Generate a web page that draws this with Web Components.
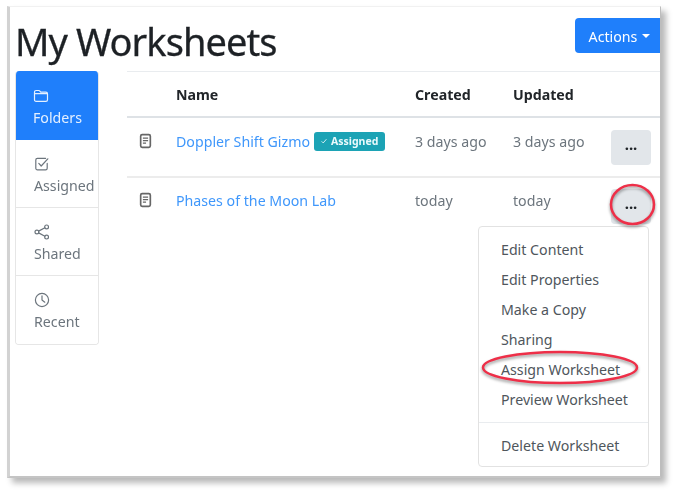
<!DOCTYPE html>
<html lang="en">
<head>
<meta charset="utf-8">
<title>My Worksheets</title>
<style>
  html, body { margin: 0; padding: 0; background: #fff; }
  body { font-family: "Noto Sans", "Open Sans", Arial, sans-serif; color: #212529; width: 675px; height: 491px; overflow: hidden; }
</style>
</head>
<body>
<ws-page>
  <ws-header slot="header" title-text="My Worksheets"></ws-header>
  <ws-sidenav slot="nav">
    <ws-nav-item icon="folder" active>Folders</ws-nav-item>
    <ws-nav-item icon="check">Assigned</ws-nav-item>
    <ws-nav-item icon="share">Shared</ws-nav-item>
    <ws-nav-item icon="clock">Recent</ws-nav-item>
  </ws-sidenav>
  <ws-table slot="main">
    <ws-row name="Doppler Shift Gizmo" created="3 days ago" updated="3 days ago" assigned></ws-row>
    <ws-row name="Phases of the Moon Lab" created="today" updated="today" last></ws-row>
  </ws-table>
  <ws-menu slot="overlay"></ws-menu>
</ws-page>

<script>
(function () {
  var ICONS = {
    folder: '<path d="M1.5 4.2c0-1 .7-1.7 1.6-1.7h2.6c.6 0 1 .3 1.4.8l.6.8h5.2c1 0 1.6.7 1.6 1.6v6c0 1-.7 1.7-1.6 1.7H3.1c-1 0-1.6-.7-1.6-1.7z"/><path d="M1.6 5.6h12.8"/>',
    check: '<path d="M13.2 7.4v4.8c0 .9-.7 1.6-1.6 1.6H3.4c-.9 0-1.6-.7-1.6-1.6V4c0-.9.7-1.6 1.6-1.6h8.2"/><path d="M4.8 7.4l2.4 2.6 6.6-7.2"/>',
    share: '<circle cx="12.6" cy="2.9" r="1.9"/><circle cx="2.9" cy="8" r="1.9"/><circle cx="12.6" cy="13.1" r="1.9"/><path d="M4.6 7.1l6.3-3.3M4.6 8.9l6.3 3.3"/>',
    clock: '<circle cx="8" cy="8" r="6.6"/><path d="M8 3.9V8l2.8 2.2"/>'
  };

  class WsPage extends HTMLElement {
    constructor() {
      super();
      this.attachShadow({ mode: "open" });
      this.shadowRoot.innerHTML =
        "<style>" +
        ":host{display:block;position:relative;box-sizing:border-box;width:654px;height:472px;margin:6px 0 0 7px;" +
        "background:#fff;border-top:1px solid #f1f1f1;border-left:3px solid #d2d2d2;border-right:1px solid #bdbdbd;border-bottom:2px solid #c4c4c4;" +
        "box-shadow:5px 5px 6px rgba(0,0,0,.28);filter:blur(.35px);}" +
        ".body{display:flex;align-items:flex-start;padding-left:5px;}" +
        ".nav{flex:0 0 84px;}" +
        ".main{flex:1;margin-left:28px;min-width:0;}" +
        "</style>" +
        "<slot name='header'></slot>" +
        "<div class='body'>" +
        "<div class='nav'><slot name='nav'></slot></div>" +
        "<div class='main'><slot name='main'></slot></div>" +
        "</div>" +
        "<slot name='overlay'></slot>";
    }
  }

  class WsHeader extends HTMLElement {
    constructor() {
      super();
      this.attachShadow({ mode: "open" });
    }

    connectedCallback() {
      this.shadowRoot.innerHTML =
        "<style>" +
        ":host{display:flex;justify-content:space-between;align-items:flex-start;height:64px;padding-left:5px;box-sizing:border-box;}" +
        "h1{margin:9px 0 0;font-size:38px;line-height:50px;font-weight:400;color:#1d2125;letter-spacing:-.95px;-webkit-text-stroke:.3px #1d2125;}" +
        "button{margin-top:11px;width:85px;height:35px;border:0;border-radius:4px 0 0 4px;background:#1f7ffb;color:#fff;" +
        "font:14.2px/35px 'Noto Sans',sans-serif;padding:1px 0 0 4px;display:flex;align-items:center;justify-content:center;gap:5px;}" +
        ".caret{width:0;height:0;border:4px solid transparent;border-top-color:#fff;border-bottom:0;}" +
        "</style>" +
        "<h1>" + this.getAttribute("title-text") + "</h1>" +
        "<button>Actions<span class='caret'></span></button>";
    }
  }

  class WsSidenav extends HTMLElement {
    constructor() {
      super();
      this.attachShadow({ mode: "open" });
      this.shadowRoot.innerHTML =
        "<style>:host{display:block;width:84px;border:1px solid #e6e6e6;border-top:0;border-radius:4px;box-sizing:border-box;overflow:hidden;}</style>" +
        "<slot></slot>";
    }
  }

  class WsNavItem extends HTMLElement {
    constructor() {
      super();
      this.attachShadow({ mode: "open" });
    }

    connectedCallback() {
      var active = this.hasAttribute("active");
      var icon = ICONS[this.getAttribute("icon")];
      this.shadowRoot.innerHTML =
        "<style>" +
        ":host{display:block;box-sizing:border-box;height:" + (active ? "69" : "68") + "px;padding:" + (active ? "17" : "16") + "px 0 0 18px;" +
        "color:" + (active ? "#e4f0ff" : "#6c757d") + ";background:" + (active ? "#1f7ffb" : "#fff") + ";" +
        (active ? "margin:0 -1px;" : "border-bottom:1px solid #e6e6e6;") + "}" +
        ":host(:last-child){border-bottom:0;}" +
        "svg{display:block;width:16px;height:16px;fill:none;stroke:currentColor;stroke-width:1.2;stroke-linecap:round;stroke-linejoin:round;}" +
        ".label{display:block;margin-top:4px;font-size:14.2px;line-height:20px;white-space:nowrap;}" +
        "</style>" +
        "<svg viewBox='0 0 16 16'>" + icon + "</svg>" +
        "<span class='label'><slot></slot></span>";
    }
  }

  class WsTable extends HTMLElement {
    constructor() {
      super();
      this.attachShadow({ mode: "open" });
      this.shadowRoot.innerHTML =
        "<style>" +
        ":host{display:block;--cols:49px 239px 98px 98px 1fr;}" +
        ".head{display:grid;grid-template-columns:var(--cols);height:44px;box-sizing:content-box;border-top:1px solid #e9ecef;border-bottom:2px solid #dee2e6;" +
        "font-size:14.2px;font-weight:700;line-height:46px;color:#212529;}" +
        "</style>" +
        "<div class='head'><span></span><span>Name</span><span>Created</span><span>Updated</span><span></span></div>" +
        "<slot></slot>";
    }
  }

  class WsRow extends HTMLElement {
    constructor() {
      super();
      this.attachShadow({ mode: "open" });
    }

    connectedCallback() {
      var badge = this.hasAttribute("assigned")
        ? "<span class='badge'><svg viewBox='0 0 10 10'><path d='M2 5.4l2 2 4-4.6'/></svg>Assigned</span>"
        : "";
      var last = this.hasAttribute("last");
      this.shadowRoot.innerHTML =
        "<style>" +
        ":host{display:grid;grid-template-columns:var(--cols);height:60px;box-sizing:border-box;" +
        "font-size:14.2px;line-height:24px;color:#6c757d;" + (last ? "" : "border-bottom:2px solid #ececec;") + "}" +
        "div{padding-top:" + (last ? "11" : "12") + "px;white-space:nowrap;}" +
        ".doc{display:block;width:13px;height:16px;margin:3px 0 0 12px;fill:none;stroke:#666;stroke-width:1.8;}" +
        ".doc .fill{stroke-width:1.3;}" +
        "a{color:#3f97fb;text-decoration:none;}" +
        ".badge{display:inline-flex;align-items:center;gap:3px;box-sizing:border-box;height:19px;width:71px;margin-left:4px;padding-left:6px;vertical-align:2px;" +
        "background:#1ca3b5;color:#eafafc;border-radius:3px;font-size:10.5px;font-weight:700;line-height:19px;}" +
        ".badge svg{width:8px;height:8px;fill:none;stroke:#fff;stroke-width:1;}" +
        "button{display:flex;align-items:center;justify-content:center;width:40px;height:35px;margin-top:0;border:0;border-radius:4px;padding:0;" +
        "background:#e2e6ea;color:#212529;font:700 15px/1 'Noto Sans',sans-serif;}" +
        "button span{display:block;transform:translateY(-3px);}" +
        "</style>" +
        "<div><svg class='doc' viewBox='0 0 14 16'><rect x='1.8' y='1.2' width='10.4' height='13.6' rx='1.6'/>" +
        "<path class='fill' d='M4.2 5h5.6M4.2 7.6h5.6M4.2 10.2h3.4'/></svg></div>" +
        "<div><a href='#'>" + this.getAttribute("name") + "</a>" + badge + "</div>" +
        "<div>" + this.getAttribute("created") + "</div>" +
        "<div>" + this.getAttribute("updated") + "</div>" +
        "<div><button><span>...</span></button></div>";
    }
  }

  // menu and the two red marks sit over the table
  class WsMenu extends HTMLElement {
    constructor() {
      super();
      this.attachShadow({ mode: "open" });
      var items = ["Edit Content", "Edit Properties", "Make a Copy", "Sharing", "Assign Worksheet", "Preview Worksheet"];
      var html = "";
      for (var i = 0; i < items.length; i++) {
        html += "<li>" + items[i] + "</li>";
      }
      this.shadowRoot.innerHTML =
        "<style>" +
        ":host{display:block;}" +
        "ul{position:absolute;left:468px;top:219px;width:171px;height:241px;box-sizing:border-box;margin:0;padding:8px 0 0;list-style:none;" +
        "background:#fff;border:1px solid #e2e2e2;border-radius:4px;font-size:14.2px;line-height:30px;color:#4f565c;}" +
        "li{padding-left:22px;white-space:nowrap;}" +
        "hr{margin:7px 0 8px;border:0;border-top:1px solid #e9ecef;}" +
        "svg{position:absolute;left:0;top:0;width:654px;height:472px;fill:none;overflow:visible;pointer-events:none;}" +
        "ellipse{stroke:#ee2f48;stroke-width:2.5;filter:drop-shadow(0 2px 1.5px rgba(0,0,0,.4));}" +
        "</style>" +
        "<ul>" + html + "<hr><li>Delete Worksheet</li></ul>" +
        "<svg viewBox='0 0 654 472'>" +
        "<ellipse cx='622.5' cy='197.5' rx='21.5' ry='19.5'/>" +
        "<ellipse cx='550' cy='360.5' rx='77' ry='15.5'/>" +
        "</svg>";
    }
  }

  customElements.define("ws-page", WsPage);
  customElements.define("ws-header", WsHeader);
  customElements.define("ws-sidenav", WsSidenav);
  customElements.define("ws-nav-item", WsNavItem);
  customElements.define("ws-table", WsTable);
  customElements.define("ws-row", WsRow);
  customElements.define("ws-menu", WsMenu);
})();
</script>
</body>
</html>
